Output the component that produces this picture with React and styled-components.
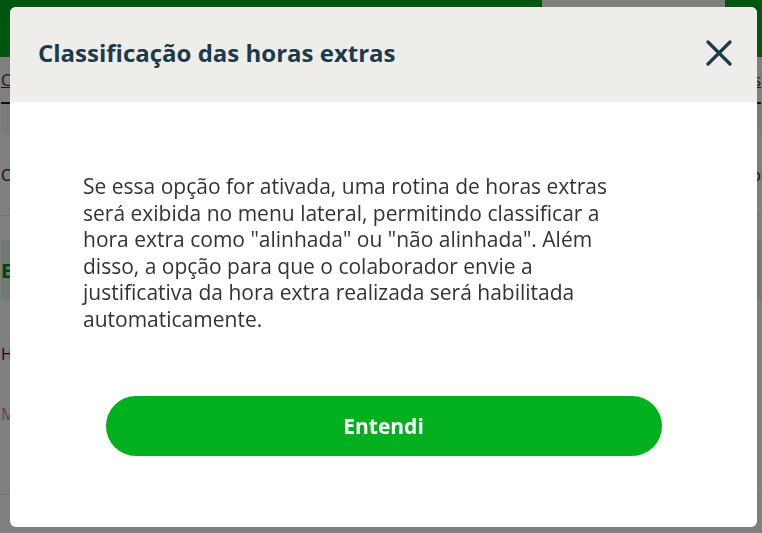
import styled, { createGlobalStyle } from "styled-components";

const GlobalStyle = createGlobalStyle`
  html, body {
    margin: 0;
    padding: 0;
    overflow: hidden;
    font-family: "Open Sans", "Noto Sans", sans-serif;
    background: #ffffff;
  }
`;

// Page behind the modal
const Page = styled.div`
  width: 762px;
  height: 533px;
  overflow: hidden;
`;

const TopBar = styled.header`
  height: 57px;
  background: #00ac1e;
  display: flex;
  justify-content: flex-end;
  padding-right: 37px;
`;

const PunchButton = styled.div`
  width: 183px;
  height: 40px;
  margin-top: -6px;
  border-radius: 0 0 22px 22px;
  background: #ffffff;
  color: #1a3b4c;
  font-weight: 700;
  font-size: 16px;
  display: flex;
  align-items: center;
  justify-content: center;
`;

const Content = styled.main`
  padding: 0 1px;
`;

const Tabs = styled.nav`
  height: 45px;
  display: flex;
  align-items: center;
  justify-content: space-between;
  border-bottom: 2px solid #222;
`;

const TabLink = styled.span`
  font-size: 16px;
  color: #1a3b4c;
  text-decoration: underline;
`;

const Band = styled.div`
  height: 30px;
  background: #f4f4f4;
`;

const Row = styled.div`
  height: ${(p) => p.h}px;
  display: flex;
  align-items: center;
  justify-content: space-between;
  border-bottom: ${(p) => (p.line ? "1px solid #dcdcdc" : "none")};
  font-size: 16px;
  color: ${(p) => p.color || "#222"};
`;

const GreenBox = styled.div`
  height: 60px;
  margin: 24px 0;
  background: #e3f3e5;
  display: flex;
  align-items: center;
  font-size: 20px;
  font-weight: 700;
  color: #008a18;
`;

// Modal
const Overlay = styled.div`
  position: fixed;
  inset: 0;
  background: rgba(0, 0, 0, 0.5);
  padding: 7px 5px 0 10px;
`;

const Modal = styled.section`
  height: 520px;
  background: #ffffff;
  border-radius: 6px;
  overflow: hidden;
  display: flex;
  flex-direction: column;
`;

const ModalHeader = styled.div`
  height: 95px;
  background: #efedea;
  display: flex;
  align-items: center;
  justify-content: space-between;
  padding: 0 24px 4px 28px;
  box-sizing: border-box;
`;

const Title = styled.h2`
  margin: 0;
  font-size: 24px;
  font-weight: 700;
  color: #1a3b4c;
`;

const CloseButton = styled.button`
  border: none;
  background: none;
  padding: 0;
  width: 28px;
  height: 28px;
  display: flex;
  align-items: center;
  justify-content: center;
  cursor: pointer;
  color: #1a3b4c;
`;

const Body = styled.div`
  flex: 1;
  display: flex;
  flex-direction: column;
  padding: 71px 73px 0;
`;

const Text = styled.p`
  margin: 0;
  max-width: 552px;
  font-size: 21px;
  line-height: 26.6px;
  color: #333333;
`;

const ConfirmButton = styled.button`
  align-self: center;
  margin-top: 63px;
  width: 556px;
  height: 60px;
  border: none;
  border-radius: 30px;
  background: #00b01e;
  color: #ffffff;
  font-family: inherit;
  font-size: 21px;
  font-weight: 700;
  cursor: pointer;
`;

const App = () => {
  return (
    <>
      <GlobalStyle />
      <Page>
        <TopBar>
          <PunchButton>Bater ponto</PunchButton>
        </TopBar>
        <Content>
          <Tabs>
            <TabLink>Controle</TabLink>
            <TabLink>Ajustes</TabLink>
          </Tabs>
          <Band />
          <Row h={81} line>
            <span>Ocorrências</span>
            <span>Ciclo</span>
          </Row>
          <GreenBox>Extras</GreenBox>
          <Row h={60}>
            <span>Horas</span>
          </Row>
          <Row h={60} color="#9a9a9a">
            <span>Minutos</span>
          </Row>
          <Row h={50} line />
        </Content>
      </Page>

      <Overlay>
        <Modal>
          <ModalHeader>
            <Title>Classificação das horas extras</Title>
            <CloseButton aria-label="Fechar">
              <svg width="26" height="26" viewBox="0 0 26 26" fill="none">
                <path d="M2 2L24 24M24 2L2 24" stroke="currentColor" strokeWidth="3.2" strokeLinecap="round" />
              </svg>
            </CloseButton>
          </ModalHeader>
          <Body>
            <Text>
              Se essa opção for ativada, uma rotina de horas extras será exibida no menu lateral, permitindo classificar a hora extra como "alinhada" ou "não alinhada". Além disso, a opção para que o colaborador envie a justificativa da hora extra realizada será habilitada automaticamente.
            </Text>
            <ConfirmButton>Entendi</ConfirmButton>
          </Body>
        </Modal>
      </Overlay>
    </>
  );
};

export default App;
